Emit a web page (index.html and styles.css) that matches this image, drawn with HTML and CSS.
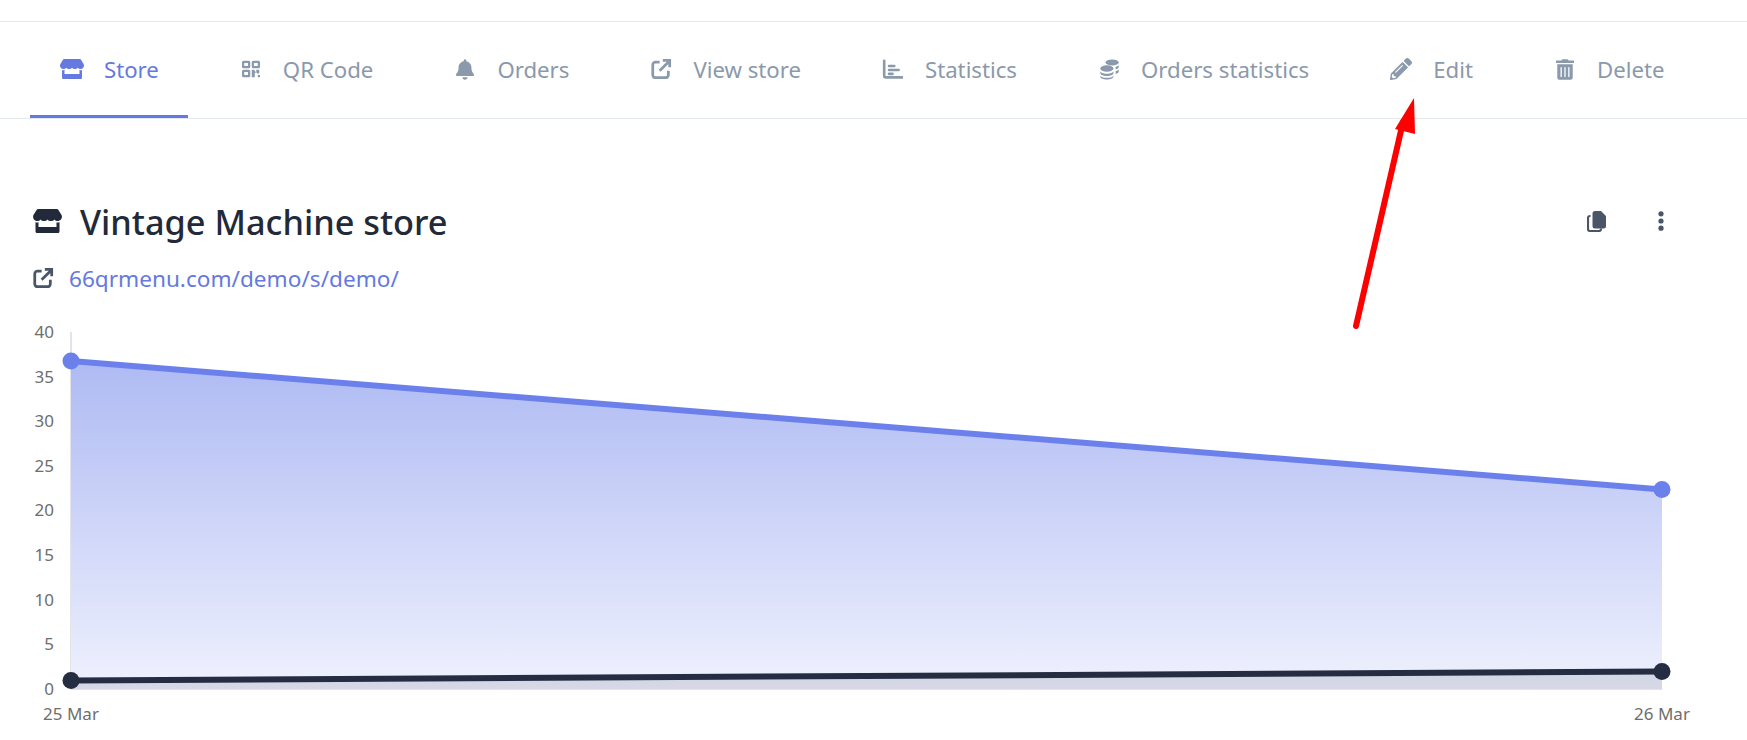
FILE: index.html
```html
<!DOCTYPE html>
<html lang="en">
<head>
  <meta charset="UTF-8" />
  <meta name="viewport" content="width=device-width, initial-scale=1" />
  <title>Vintage Machine store</title>
  <link rel="stylesheet" href="styles.css">
</head>
<body>
  <svg class="sprites" width="0" height="0" aria-hidden="true">
    <symbol id="i-store" viewBox="0 0 616 512">
      <path d="M602 118.6L537.1 15C531.3 5.7 521 0 510 0H106C95 0 84.7 5.7 78.9 15L14 118.6c-33.5 53.5-3.8 127.9 58.8 136.4 4.5.6 9.1.9 13.6.9 29.6 0 55.8-13 73.8-33.1 18 20.1 44.3 33.1 73.8 33.1 29.6 0 55.8-13 73.8-33.1 18 20.1 44.3 33.1 73.8 33.1 29.6 0 55.8-13 73.8-33.1 18.1 20.1 44.3 33.1 73.8 33.1 4.6 0 9.1-.3 13.6-.9 62.8-8.4 92.6-82.8 59-136.4zM529.5 288c-10 0-19.9-1.5-29.5-3.8V384H116v-99.8c-9.6 2.2-19.5 3.8-29.5 3.8-6 0-12.1-.4-18-1.2-5.6-.8-11.1-2.1-16.4-3.6V480c0 17.7 14.3 32 32 32h448c17.7 0 32-14.3 32-32V283.2c-5.4 1.6-10.8 2.9-16.4 3.6-6.1.8-12.1 1.2-18.2 1.2z"/>
    </symbol>
    <symbol id="i-qr" viewBox="0 0 24 24">
      <path fill-rule="evenodd" d="M2 1h7a2 2 0 0 1 2 2v6a2 2 0 0 1-2 2H2a2 2 0 0 1-2-2V3a2 2 0 0 1 2-2zm1 3v4h5V4zM15 1h7a2 2 0 0 1 2 2v6a2 2 0 0 1-2 2h-7a2 2 0 0 1-2-2V3a2 2 0 0 1 2-2zm1 3v4h5V4zM2 13h7a2 2 0 0 1 2 2v6a2 2 0 0 1-2 2H2a2 2 0 0 1-2-2v-6a2 2 0 0 1 2-2zm1 3v4h5v-4z"/>
      <path d="M13 13h3l3 4v-4h4v5h-3v-1h-3v6h-4zM21 20h3v3h-3z"/>
    </symbol>
    <symbol id="i-bell" viewBox="0 0 448 512">
      <path d="M224 512c35.32 0 63.97-28.65 63.97-64H160.03c0 35.35 28.65 64 63.97 64zm215.39-149.71c-19.32-20.76-55.47-51.99-55.47-154.29 0-77.7-54.48-139.9-127.94-155.16V32c0-17.67-14.32-32-31.98-32s-31.98 14.33-31.98 32v20.84C118.56 68.1 64.08 130.3 64.08 208c0 102.3-36.15 133.53-55.47 154.29-6 6.45-8.66 14.16-8.61 21.71.11 16.4 12.98 32 32.1 32h383.8c19.12 0 32-15.6 32.1-32 .05-7.55-2.61-15.27-8.61-21.71z"/>
    </symbol>
    <symbol id="i-link" viewBox="0 0 24 24">
      <path d="M10.5 4.5H6A3 3 0 0 0 3 7.5v11A3 3 0 0 0 6 21.500h11a3 3 0 0 0 3-3V14M10.500 14 21 3.500M14 2.500h7.500V10" fill="none" stroke="currentColor" stroke-width="3"/>
    </symbol>
    <symbol id="i-chart" viewBox="0 0 24 24">
      <path d="M2.500 2v17a2 2 0 0 0 2 2H23M8 8h6M8 12.500h11M8 17h4" fill="none" stroke="currentColor" stroke-width="3" stroke-linecap="round"/>
    </symbol>
    <symbol id="i-coins" viewBox="0 0 24 24">
      <ellipse cx="15" cy="4.5" rx="7.500" ry="3.500"/>
      <path d="M19 9.500c2-.5 3.500-1.300 3.500-2.500v3c0 1-1.400 1.900-3.500 2.400zM19 14.500c2-.5 3.500-1.300 3.500-2.500v3c0 1-1.400 1.900-3.500 2.400z"/>
      <ellipse cx="9" cy="11.500" rx="7.500" ry="3.700"/>
      <path d="M1.500 14c0 2 3.400 3.500 7.500 3.500s7.500-1.500 7.500-3.500v2.500c0 2-3.400 3.500-7.500 3.500s-7.500-1.500-7.500-3.500zM1.500 19c0 2 3.400 3 7.500 3s7.500-1 7.500-3v1.500c0 2-3.400 3.500-7.500 3.500s-7.500-1.500-7.500-3.500z"/>
    </symbol>
    <symbol id="i-pencil" viewBox="0 0 512 512">
      <path d="M497.900 142.100l-46.100 46.100c-4.700 4.700-12.300 4.700-17 0l-111-111c-4.700-4.700-4.700-12.300 0-17l46.100-46.100c18.700-18.700 49.100-18.700 67.900 0l60.100 60.100c18.800 18.700 18.800 49.100 0 67.900zM284.200 99.800L21.600 362.400.4 483.900c-2.900 16.400 11.400 30.600 27.800 27.800l121.500-21.300 262.600-262.600c4.700-4.700 4.700-12.300 0-17l-111-111c-4.800-4.700-12.400-4.700-17.100 0zM124.100 339.900c-5.500-5.500-5.500-14.300 0-19.800l154-154c5.500-5.500 14.300-5.500 19.800 0s5.500 14.300 0 19.800l-154 154c-5.500 5.500-14.300 5.500-19.800 0zM88 424h48v36.300l-64.500 11.300-31.100-31.100L51.700 376H88v48z"/>
    </symbol>
    <symbol id="i-trash" viewBox="0 0 448 512">
      <path d="M32 464a48 48 0 0 0 48 48h288a48 48 0 0 0 48-48V128H32zm272-256a16 16 0 0 1 32 0v224a16 16 0 0 1-32 0zm-96 0a16 16 0 0 1 32 0v224a16 16 0 0 1-32 0zm-96 0a16 16 0 0 1 32 0v224a16 16 0 0 1-32 0zM432 32H312l-9.400-18.700A24 24 0 0 0 281.100 0H166.800a23.720 23.720 0 0 0-21.400 13.300L136 32H16A16 16 0 0 0 0 48v32a16 16 0 0 0 16 16h416a16 16 0 0 0 16-16V48a16 16 0 0 0-16-16z"/>
    </symbol>
    <symbol id="i-copy" viewBox="0 0 19 21">
      <path d="M8 0h6l5 5v10a2.500 2.500 0 0 1-2.500 2.500H8A2.500 2.500 0 0 1 5.500 15V2.500A2.500 2.500 0 0 1 8 0z"/>
      <path d="M3.500 5H3a2 2 0 0 0-2 2v11a2 2 0 0 0 2 2h9a2 2 0 0 0 2-2v-.5" fill="none" stroke="currentColor" stroke-width="2.200"/>
    </symbol>
    <symbol id="i-dots" viewBox="0 0 6 20">
      <circle cx="3" cy="2.800" r="2.600"/>
      <circle cx="3" cy="10" r="2.600"/>
      <circle cx="3" cy="17.200" r="2.600"/>
    </symbol>
  </svg>

  <div class="topbar"></div>

  <nav class="tabs">
    <a class="tab active"><span class="tab-icon"><svg class="ic-store"><use href="#i-store"/></svg></span>Store</a>
    <a class="tab"><span class="tab-icon"><svg class="ic-qr"><use href="#i-qr"/></svg></span>QR Code</a>
    <a class="tab"><span class="tab-icon"><svg class="ic-bell"><use href="#i-bell"/></svg></span>Orders</a>
    <a class="tab"><span class="tab-icon"><svg class="ic-link"><use href="#i-link"/></svg></span>View store</a>
    <a class="tab"><span class="tab-icon"><svg class="ic-chart"><use href="#i-chart"/></svg></span>Statistics</a>
    <a class="tab"><span class="tab-icon"><svg class="ic-coins"><use href="#i-coins"/></svg></span>Orders statistics</a>
    <a class="tab"><span class="tab-icon"><svg class="ic-pencil"><use href="#i-pencil"/></svg></span>Edit</a>
    <a class="tab"><span class="tab-icon"><svg class="ic-trash"><use href="#i-trash"/></svg></span>Delete</a>
  </nav>

  <main class="content">
    <div class="title-row">
      <h1 class="title"><svg class="title-icon"><use href="#i-store"/></svg>Vintage Machine store</h1>
      <div class="actions">
        <svg class="ic-copy"><use href="#i-copy"/></svg>
        <svg class="ic-dots"><use href="#i-dots"/></svg>
      </div>
    </div>

    <div class="store-link">
      <svg class="link-icon"><use href="#i-link"/></svg>
      <a class="link-text">66qrmenu.com/demo/s/demo/</a>
    </div>

    <svg class="chart" viewBox="30 320 1687 410" width="1687" height="410">
      <defs>
        <linearGradient id="blue-fill" gradientUnits="userSpaceOnUse" x1="0" y1="361" x2="0" y2="689">
          <stop offset="0" stop-color="#aebaf3"/>
          <stop offset="1" stop-color="#eff1fd"/>
        </linearGradient>
      </defs>

      <g class="tick">
        <text x="54" y="338">40</text>
        <text x="54" y="383">35</text>
        <text x="54" y="427">30</text>
        <text x="54" y="472">25</text>
        <text x="54" y="516">20</text>
        <text x="54" y="561">15</text>
        <text x="54" y="606">10</text>
        <text x="54" y="650">5</text>
        <text x="54" y="695">0</text>
      </g>
      <text class="tick-x" x="71" y="720">25 Mar</text>
      <text class="tick-x" x="1662" y="720">26 Mar</text>

      <path class="axis" d="M71 332V689H1662"/>
      <path d="M71 361L1662 489V689H71z" fill="url(#blue-fill)"/>
      <path d="M71 680.500L1662 671.500V689H71z" fill="#252d43" fill-opacity=".12"/>

      <path class="line-blue" d="M71 361L1662 489.500"/>
      <circle class="dot-blue" cx="71" cy="361" r="8.500"/>
      <circle class="dot-blue" cx="1662" cy="489.500" r="8.500"/>

      <path class="line-dark" d="M71 680.500L1662 671.500"/>
      <circle class="dot-dark" cx="71" cy="680.500" r="8.500"/>
      <circle class="dot-dark" cx="1662" cy="671.500" r="8.500"/>
    </svg>
  </main>

  <!-- red arrow drawn over the screenshot -->
  <svg class="arrow" viewBox="1340 90 90 250" width="90" height="250">
    <path d="M1356 326L1403 122" stroke="#f00" stroke-width="6" stroke-linecap="round" fill="none"/>
    <path d="M1414 98L1395 129 1415 134z" fill="#f00"/>
  </svg>
</body>
</html>
```

FILE: styles.css
```css
body {
  margin: 0;
  background: #fff;
  color: #222a3a;
  font-family: "Noto Sans", Arial, sans-serif;
  position: relative;
  height: 740px;
  overflow: hidden;
}

.sprites {
  position: absolute;
}

svg {
  fill: currentColor;
}

.topbar {
  height: 21px;
  border-bottom: 1px solid #e3e9ec;
}

/* tabs */
.tabs {
  display: flex;
  gap: 21px;
  padding-left: 30px;
  border-bottom: 1px solid #e3e9ec;
}

.tab {
  display: flex;
  align-items: center;
  height: 92px;
  padding: 1px 29px 0 30px;
  border-bottom: 3px solid transparent;
  color: #8a99ab;
  font-size: 22.2px;
  white-space: nowrap;
}

.tab.active {
  color: #6579e0;
  border-bottom-color: #6579e0;
}

.tab-icon {
  display: flex;
  justify-content: center;
  width: 24px;
  margin-right: 20px;
}

.ic-store { width: 25px; height: 20px; }
.ic-qr { width: 18px; height: 20px; }
.ic-bell { width: 18px; height: 21px; }
.ic-link { width: 22px; height: 22px; }
.ic-chart { width: 21px; height: 21px; }
.ic-coins { width: 21px; height: 22px; }
.ic-pencil { width: 22px; height: 22px; }
.ic-trash { width: 18px; height: 21px; }

/* page content */
.content {
  padding: 0 30px;
}

.title-row {
  display: flex;
  align-items: center;
  justify-content: space-between;
  margin-top: 78px;
  height: 48px;
}

.title {
  display: flex;
  align-items: center;
  margin: 0;
  font-size: 34.3px;
  font-weight: 500;
  color: #222a3a;
}

.title-icon {
  width: 29px;
  height: 24px;
  margin: 0 18px 0 3px;
}

.actions {
  display: flex;
  align-items: center;
  gap: 52px;
  padding-right: 53px;
  color: #4a5568;
}

.ic-copy { width: 19px; height: 21px; }
.ic-dots { width: 6px; height: 20px; }

.store-link {
  display: flex;
  align-items: center;
  margin-top: 14px;
  height: 38px;
  font-size: 22.6px;
}

.link-icon {
  width: 22px;
  height: 22px;
  margin: 0 15px 0 2px;
  color: #4a5568;
}

.link-text {
  color: #6579e0;
}

/* chart */
.chart {
  display: block;
  margin-top: 23px;
  font-size: 17px;
}

.tick text {
  fill: #6e6e6e;
  text-anchor: end;
}

.tick-x {
  fill: #6e6e6e;
  text-anchor: middle;
}

.axis {
  fill: none;
  stroke: #d9dbe4;
  stroke-width: 1.5;
}

.line-blue {
  stroke: #6c80ec;
  stroke-width: 6;
  fill: none;
}

.dot-blue {
  fill: #6c80ec;
}

.line-dark {
  stroke: #252d43;
  stroke-width: 6;
  fill: none;
}

.dot-dark {
  fill: #252d43;
}

.arrow {
  position: absolute;
  left: 1340px;
  top: 90px;
}
```
